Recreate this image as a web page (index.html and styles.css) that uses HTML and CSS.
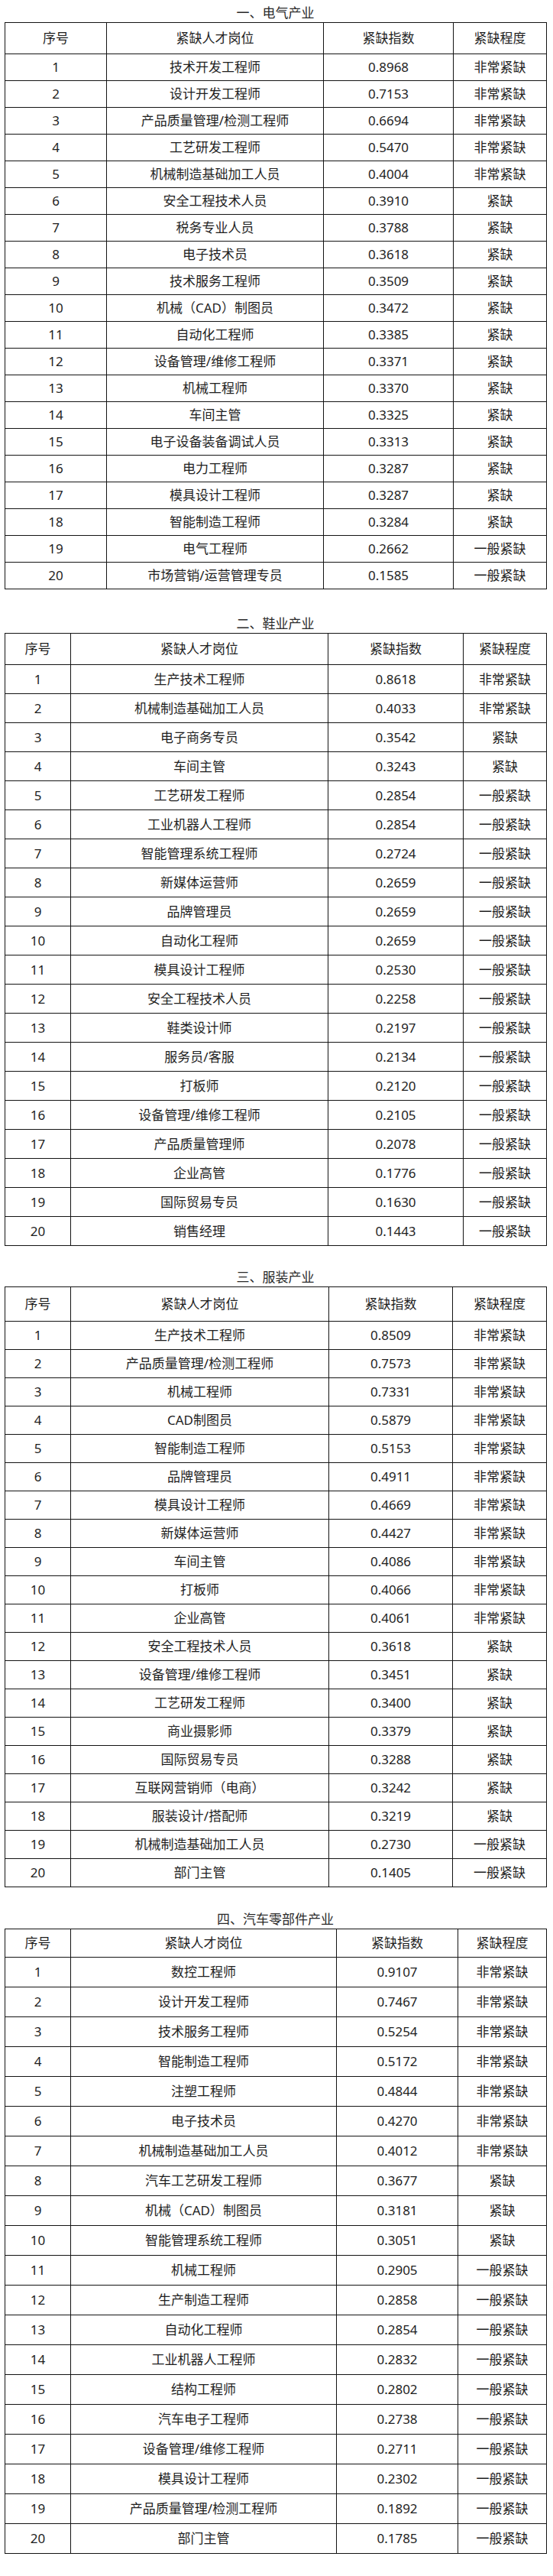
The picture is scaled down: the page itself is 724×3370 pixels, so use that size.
FILE: index.html
```html
<!DOCTYPE html>
<html lang="zh-CN">
<head>
<meta charset="utf-8">
<title>紧缺人才目录</title>
<link rel="stylesheet" href="styles.css">
</head>
<body>
<main class="page">

<section class="sec sec1">
<div class="title">一、电气产业</div>
<table class="tbl t1">
<colgroup><col class="c1"><col class="c2"><col class="c3"><col class="c4"></colgroup>
<thead><tr class="hd"><th>序号</th><th>紧缺人才岗位</th><th>紧缺指数</th><th>紧缺程度</th></tr></thead>
<tbody>
<tr><td>1</td><td>技术开发工程师</td><td>0.8968</td><td>非常紧缺</td></tr>
<tr><td>2</td><td>设计开发工程师</td><td>0.7153</td><td>非常紧缺</td></tr>
<tr><td>3</td><td>产品质量管理/检测工程师</td><td>0.6694</td><td>非常紧缺</td></tr>
<tr><td>4</td><td>工艺研发工程师</td><td>0.5470</td><td>非常紧缺</td></tr>
<tr><td>5</td><td>机械制造基础加工人员</td><td>0.4004</td><td>非常紧缺</td></tr>
<tr><td>6</td><td>安全工程技术人员</td><td>0.3910</td><td>紧缺</td></tr>
<tr><td>7</td><td>税务专业人员</td><td>0.3788</td><td>紧缺</td></tr>
<tr><td>8</td><td>电子技术员</td><td>0.3618</td><td>紧缺</td></tr>
<tr><td>9</td><td>技术服务工程师</td><td>0.3509</td><td>紧缺</td></tr>
<tr><td>10</td><td>机械（CAD）制图员</td><td>0.3472</td><td>紧缺</td></tr>
<tr><td>11</td><td>自动化工程师</td><td>0.3385</td><td>紧缺</td></tr>
<tr><td>12</td><td>设备管理/维修工程师</td><td>0.3371</td><td>紧缺</td></tr>
<tr><td>13</td><td>机械工程师</td><td>0.3370</td><td>紧缺</td></tr>
<tr><td>14</td><td>车间主管</td><td>0.3325</td><td>紧缺</td></tr>
<tr><td>15</td><td>电子设备装备调试人员</td><td>0.3313</td><td>紧缺</td></tr>
<tr><td>16</td><td>电力工程师</td><td>0.3287</td><td>紧缺</td></tr>
<tr><td>17</td><td>模具设计工程师</td><td>0.3287</td><td>紧缺</td></tr>
<tr><td>18</td><td>智能制造工程师</td><td>0.3284</td><td>紧缺</td></tr>
<tr><td>19</td><td>电气工程师</td><td>0.2662</td><td>一般紧缺</td></tr>
<tr><td>20</td><td>市场营销/运营管理专员</td><td>0.1585</td><td>一般紧缺</td></tr>
</tbody>
</table>
</section>

<section class="sec sec2">
<div class="title">二、鞋业产业</div>
<table class="tbl t2">
<colgroup><col class="c1"><col class="c2"><col class="c3"><col class="c4"></colgroup>
<thead><tr class="hd"><th>序号</th><th>紧缺人才岗位</th><th>紧缺指数</th><th>紧缺程度</th></tr></thead>
<tbody>
<tr><td>1</td><td>生产技术工程师</td><td>0.8618</td><td>非常紧缺</td></tr>
<tr><td>2</td><td>机械制造基础加工人员</td><td>0.4033</td><td>非常紧缺</td></tr>
<tr><td>3</td><td>电子商务专员</td><td>0.3542</td><td>紧缺</td></tr>
<tr><td>4</td><td>车间主管</td><td>0.3243</td><td>紧缺</td></tr>
<tr><td>5</td><td>工艺研发工程师</td><td>0.2854</td><td>一般紧缺</td></tr>
<tr><td>6</td><td>工业机器人工程师</td><td>0.2854</td><td>一般紧缺</td></tr>
<tr><td>7</td><td>智能管理系统工程师</td><td>0.2724</td><td>一般紧缺</td></tr>
<tr><td>8</td><td>新媒体运营师</td><td>0.2659</td><td>一般紧缺</td></tr>
<tr><td>9</td><td>品牌管理员</td><td>0.2659</td><td>一般紧缺</td></tr>
<tr><td>10</td><td>自动化工程师</td><td>0.2659</td><td>一般紧缺</td></tr>
<tr><td>11</td><td>模具设计工程师</td><td>0.2530</td><td>一般紧缺</td></tr>
<tr><td>12</td><td>安全工程技术人员</td><td>0.2258</td><td>一般紧缺</td></tr>
<tr><td>13</td><td>鞋类设计师</td><td>0.2197</td><td>一般紧缺</td></tr>
<tr><td>14</td><td>服务员/客服</td><td>0.2134</td><td>一般紧缺</td></tr>
<tr><td>15</td><td>打板师</td><td>0.2120</td><td>一般紧缺</td></tr>
<tr><td>16</td><td>设备管理/维修工程师</td><td>0.2105</td><td>一般紧缺</td></tr>
<tr><td>17</td><td>产品质量管理师</td><td>0.2078</td><td>一般紧缺</td></tr>
<tr><td>18</td><td>企业高管</td><td>0.1776</td><td>一般紧缺</td></tr>
<tr><td>19</td><td>国际贸易专员</td><td>0.1630</td><td>一般紧缺</td></tr>
<tr><td>20</td><td>销售经理</td><td>0.1443</td><td>一般紧缺</td></tr>
</tbody>
</table>
</section>

<section class="sec sec3">
<div class="title">三、服装产业</div>
<table class="tbl t3">
<colgroup><col class="c1"><col class="c2"><col class="c3"><col class="c4"></colgroup>
<thead><tr class="hd"><th>序号</th><th>紧缺人才岗位</th><th>紧缺指数</th><th>紧缺程度</th></tr></thead>
<tbody>
<tr><td>1</td><td>生产技术工程师</td><td>0.8509</td><td>非常紧缺</td></tr>
<tr><td>2</td><td>产品质量管理/检测工程师</td><td>0.7573</td><td>非常紧缺</td></tr>
<tr><td>3</td><td>机械工程师</td><td>0.7331</td><td>非常紧缺</td></tr>
<tr><td>4</td><td>CAD制图员</td><td>0.5879</td><td>非常紧缺</td></tr>
<tr><td>5</td><td>智能制造工程师</td><td>0.5153</td><td>非常紧缺</td></tr>
<tr><td>6</td><td>品牌管理员</td><td>0.4911</td><td>非常紧缺</td></tr>
<tr><td>7</td><td>模具设计工程师</td><td>0.4669</td><td>非常紧缺</td></tr>
<tr><td>8</td><td>新媒体运营师</td><td>0.4427</td><td>非常紧缺</td></tr>
<tr><td>9</td><td>车间主管</td><td>0.4086</td><td>非常紧缺</td></tr>
<tr><td>10</td><td>打板师</td><td>0.4066</td><td>非常紧缺</td></tr>
<tr><td>11</td><td>企业高管</td><td>0.4061</td><td>非常紧缺</td></tr>
<tr><td>12</td><td>安全工程技术人员</td><td>0.3618</td><td>紧缺</td></tr>
<tr><td>13</td><td>设备管理/维修工程师</td><td>0.3451</td><td>紧缺</td></tr>
<tr><td>14</td><td>工艺研发工程师</td><td>0.3400</td><td>紧缺</td></tr>
<tr><td>15</td><td>商业摄影师</td><td>0.3379</td><td>紧缺</td></tr>
<tr><td>16</td><td>国际贸易专员</td><td>0.3288</td><td>紧缺</td></tr>
<tr><td>17</td><td>互联网营销师（电商）</td><td>0.3242</td><td>紧缺</td></tr>
<tr><td>18</td><td>服装设计/搭配师</td><td>0.3219</td><td>紧缺</td></tr>
<tr><td>19</td><td>机械制造基础加工人员</td><td>0.2730</td><td>一般紧缺</td></tr>
<tr><td>20</td><td>部门主管</td><td>0.1405</td><td>一般紧缺</td></tr>
</tbody>
</table>
</section>

<section class="sec sec4">
<div class="title">四、汽车零部件产业</div>
<table class="tbl t4">
<colgroup><col class="c1"><col class="c2"><col class="c3"><col class="c4"></colgroup>
<thead><tr class="hd"><th>序号</th><th>紧缺人才岗位</th><th>紧缺指数</th><th>紧缺程度</th></tr></thead>
<tbody>
<tr><td>1</td><td>数控工程师</td><td>0.9107</td><td>非常紧缺</td></tr>
<tr><td>2</td><td>设计开发工程师</td><td>0.7467</td><td>非常紧缺</td></tr>
<tr><td>3</td><td>技术服务工程师</td><td>0.5254</td><td>非常紧缺</td></tr>
<tr><td>4</td><td>智能制造工程师</td><td>0.5172</td><td>非常紧缺</td></tr>
<tr><td>5</td><td>注塑工程师</td><td>0.4844</td><td>非常紧缺</td></tr>
<tr><td>6</td><td>电子技术员</td><td>0.4270</td><td>非常紧缺</td></tr>
<tr><td>7</td><td>机械制造基础加工人员</td><td>0.4012</td><td>非常紧缺</td></tr>
<tr><td>8</td><td>汽车工艺研发工程师</td><td>0.3677</td><td>紧缺</td></tr>
<tr><td>9</td><td>机械（CAD）制图员</td><td>0.3181</td><td>紧缺</td></tr>
<tr><td>10</td><td>智能管理系统工程师</td><td>0.3051</td><td>紧缺</td></tr>
<tr><td>11</td><td>机械工程师</td><td>0.2905</td><td>一般紧缺</td></tr>
<tr><td>12</td><td>生产制造工程师</td><td>0.2858</td><td>一般紧缺</td></tr>
<tr><td>13</td><td>自动化工程师</td><td>0.2854</td><td>一般紧缺</td></tr>
<tr><td>14</td><td>工业机器人工程师</td><td>0.2832</td><td>一般紧缺</td></tr>
<tr><td>15</td><td>结构工程师</td><td>0.2802</td><td>一般紧缺</td></tr>
<tr><td>16</td><td>汽车电子工程师</td><td>0.2738</td><td>一般紧缺</td></tr>
<tr><td>17</td><td>设备管理/维修工程师</td><td>0.2711</td><td>一般紧缺</td></tr>
<tr><td>18</td><td>模具设计工程师</td><td>0.2302</td><td>一般紧缺</td></tr>
<tr><td>19</td><td>产品质量管理/检测工程师</td><td>0.1892</td><td>一般紧缺</td></tr>
<tr><td>20</td><td>部门主管</td><td>0.1785</td><td>一般紧缺</td></tr>
</tbody>
</table>
</section>

</main>
</body>
</html>
```

FILE: styles.css
```css
html, body {
  margin: 0;
  padding: 0;
  background: #ffffff;
}

body {
  font-family: "Noto Sans", "Noto Sans CJK SC", sans-serif;
  color: #1e1e1e;
  font-size: 17px;
}

.page {
  display: flex;
  flex-direction: column;
  padding: 2px 9px 0 6px;
}

.sec {
  display: flex;
  flex-direction: column;
}

.sec2 { margin-top: 30px; }
.sec3 { margin-top: 26px; }
.sec4 { margin-top: 27px; }

.title {
  height: 27px;
  line-height: 27px;
  text-align: center;
  font-size: 17px;
  color: #2a2a2a;
  font-family: "Noto Sans CJK SC", sans-serif;
}

.tbl {
  width: 709px;
  border-collapse: collapse;
  table-layout: fixed;
}

.tbl th,
.tbl td {
  border: 1px solid #141414;
  padding: 0;
  text-align: center;
  vertical-align: middle;
  font-weight: normal;
  font-size: 17px;
  line-height: 20px;
  white-space: nowrap;
}

/* table 1 */
.t1 .c1 { width: 133px; }
.t1 .c2 { width: 284px; }
.t1 .c3 { width: 170px; }
.t1 .c4 { width: 122px; }
.t1 .hd { height: 41px; }
.t1 tbody tr { height: 35px; }

/* table 2 */
.t2 .c1 { width: 86px; }
.t2 .c2 { width: 337px; }
.t2 .c3 { width: 177px; }
.t2 .c4 { width: 109px; }
.t2 .hd { height: 41px; }
.t2 tbody tr { height: 38px; }

/* table 3 */
.t3 .c1 { width: 86px; }
.t3 .c2 { width: 338px; }
.t3 .c3 { width: 162px; }
.t3 .c4 { width: 123px; }
.t3 .hd { height: 45px; }
.t3 tbody tr { height: 37px; }

/* table 4 */
.t4 .c1 { width: 86px; }
.t4 .c2 { width: 348px; }
.t4 .c3 { width: 159px; }
.t4 .c4 { width: 116px; }
.t4 .hd { height: 37px; }
.t4 tbody tr { height: 39px; }
```
